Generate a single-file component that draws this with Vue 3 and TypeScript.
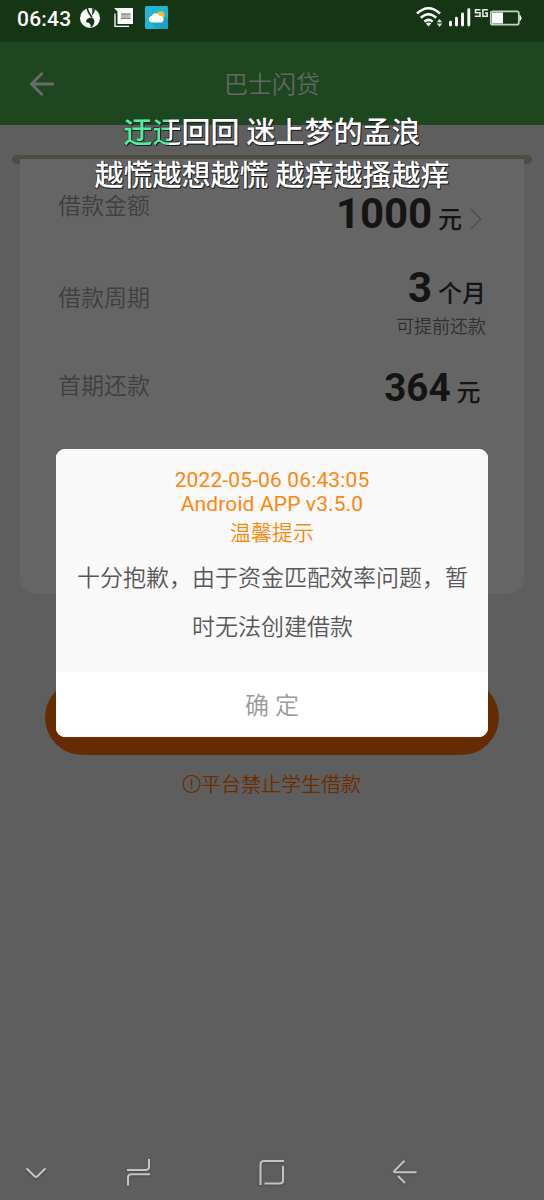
<script setup lang="ts">
interface LoanRow {
  key: string
  label: string
  value: string
  unit: string
  note?: string
  arrow?: boolean
}

const rows: LoanRow[] = [
  { key: 'amount', label: '借款金额', value: '1000', unit: '元', arrow: true },
  { key: 'period', label: '借款周期', value: '3', unit: '个月', note: '可提前还款' },
  { key: 'first', label: '首期还款', value: '364', unit: '元' },
]
</script>

<template>
  <div class="screen">
    <div class="status">
      <span class="clock">06:43</span>
      <svg class="i-app" viewBox="0 0 20 22">
        <circle cx="10" cy="11" r="10" fill="#fff" />
        <path d="M7 1C8 5 9.500 7.500 12 10.500" fill="none" stroke="#163514" stroke-width="1.600" />
        <path d="M12 1.200 15 2.200C14.500 5 13.500 7 11.500 9C12.500 6 12.500 3.500 12 1.200Z" fill="#163514" />
        <path d="M6 15.200C6 12 9 10.500 11.500 10.800C14 11.200 15 14 14 16.500C13.500 18.500 12 20 10.300 20.800C11 19 10.700 17.500 9.500 16.200C8 15 6.800 15.500 6 15.200Z" fill="#163514" />
      </svg>
      <svg class="i-note" viewBox="0 0 20 20">
        <path d="M0 0H19V16H3.500V3.500Z" fill="#fff" />
        <path d="M1 5.500V18.300H15" fill="none" stroke="#fff" stroke-width="1.300" />
        <path d="M7 5.500H16.500V11H7Z" fill="#b5bfb4" />
        <path d="M7 6H16.500M7 10.500H16.500" stroke="#75876f" stroke-width="1.200" />
      </svg>
      <svg class="i-weather" viewBox="0 0 23 23">
        <rect width="23" height="23" rx="1.500" fill="#20b5d5" />
        <path d="M5 16 12 23H21.500Q23 23 23 21.500V13L19 9Z" fill="#1aa3c3" />
        <circle cx="15.800" cy="9" r="3.700" fill="#fdbd22" />
        <path d="M7 16.500A3.300 3.300 0 0 1 6.500 10A4.400 4.400 0 0 1 14.500 9.500A3.700 3.700 0 0 1 16.500 16.500Z" fill="#fff" />
      </svg>
      <div class="grow"></div>
      <svg class="i-net" viewBox="0 0 108 26">
        <g fill="none" stroke="#fff" stroke-width="2.600">
          <path d="M1 8.500Q12.500 -2 24 8.500M4.800 12.700Q12.500 5.800 20.200 12.700M8.500 16.700Q12.500 13 16.500 16.700" />
        </g>
        <path d="M9.800 18.500Q12.500 16.500 15.200 18.500L12.500 21.500Z" fill="#fff" />
        <path d="M20.800 17.300 23.500 14 26.200 17.300ZM20.800 18.600 23.500 22 26.200 18.600Z" fill="#d5dcd4" />
        <path d="M34.500 17.300V20M40.500 13.300V20M46.500 9V20M52.800 4.800V20" stroke="#fff" stroke-width="2.900" stroke-linecap="round" />
        <path d="M64.500 4.800H59.500V7.800H64V11.200H58.800M71.800 4.800H66.900V11.200H71.200V8H69" fill="none" stroke="#edf2ec" stroke-width="1.500" />
        <rect x="74.800" y="6.300" width="28" height="13.400" rx="2" fill="none" stroke="#c8cfc7" stroke-width="1.700" />
        <rect x="76" y="7.500" width="11" height="11" fill="#fff" />
        <path d="M104 10.500Q106.500 13 104 15.500Z" fill="#fff" stroke="#fff" />
      </svg>
    </div>

    <header class="header">
      <svg class="back" viewBox="0 0 26 26">
        <path d="M13.500 2 2.500 13 13.500 24M2.500 13H25" fill="none" stroke="#6b6b6b" stroke-width="2.800" />
      </svg>
      <h1>巴士闪贷</h1>
    </header>

    <main class="page">
      <div class="slot"></div>
      <section class="card">
        <div v-for="row in rows" :key="row.key" class="row" :class="row.key">
          <span class="label">{{ row.label }}</span>
          <div class="right">
            <div class="amount-line">
              <b>{{ row.value }}</b><span class="unit">{{ row.unit }}</span>
              <svg v-if="row.arrow" class="chev" viewBox="0 0 12 22">
                <path d="M1 1 10.500 11 1 21" fill="none" stroke="#504f4a" stroke-width="1.500" />
              </svg>
            </div>
            <div v-if="row.note" class="note">{{ row.note }}</div>
          </div>
        </div>
      </section>
      <div class="submit"></div>
      <p class="warning">
        <svg viewBox="0 0 19 19">
          <circle cx="9.500" cy="9" r="8.500" fill="none" stroke="#6b2d00" stroke-width="1.200" />
          <path d="M9.500 4.300V10.800M9.500 12.300V13.900" stroke="#6b2d00" stroke-width="1.300" />
        </svg>
        <span>平台禁止学生借款</span>
      </p>
    </main>

    <nav class="nav">
      <svg viewBox="0 0 544 56">
        <g fill="none" stroke="#c4c4c4" stroke-width="2">
          <path d="M26.500 24.200 34.500 32.200Q36 33.500 37.500 32.200L45.500 24.200" />
          <path d="M127 26H145.500Q149 26 149 22.500V15M150 30.300H131.500Q128 30.300 128 33.800V41.500" />
          <path d="M284 17H264Q260.500 17 260.500 20.500V41M283 22V36.500Q283 39.500 279.500 39.500H264.500" />
          <path d="M404.500 16.800 394.500 26.800Q393.500 28.300 395 28.300H416.500M398 32 405 39" />
        </g>
      </svg>
    </nav>

    <div class="lyrics">
      <p class="line"><span class="sung">迂</span><span class="partial">迂</span>回回 迷上梦的孟浪</p>
      <p class="line">越慌越想越慌 越痒越搔越痒</p>
    </div>

    <div class="dialog">
      <div class="dialog-body">
        <p class="stamp">2022-05-06 06:43:05</p>
        <p class="stamp">Android APP v3.5.0</p>
        <p class="tip">温馨提示</p>
        <p class="message">十分抱歉，由于资金匹配效率问题，暂时无法创建借款</p>
      </div>
      <button class="ok">确 定</button>
    </div>
  </div>
</template>

<style>
body {
  margin: 0;
  background: #5e5e5e;
}
</style>

<style scoped>
.screen {
  position: relative;
  display: flex;
  flex-direction: column;
  width: 544px;
  height: 1200px;
  overflow: hidden;
  background: #5e5e5e;
  font-family: Roboto, "Noto Sans CJK SC", sans-serif;
}
p, h1 {
  margin: 0;
  font-weight: 400;
}
.status {
  display: flex;
  box-sizing: border-box;
  height: 42px;
  padding: 0 20px 0 17px;
  background: #163514;
}
.clock {
  width: 63px;
  margin-top: 7px;
  color: #fff;
  font-size: 21px;
  font-weight: 500;
  line-height: 25px;
  letter-spacing: 0.2px;
}
.i-app {
  width: 20px;
  height: 22px;
  margin-top: 6.500px;
}
.i-note {
  width: 20px;
  height: 20px;
  margin: 8px 0 0 14px;
}
.i-weather {
  width: 23px;
  height: 23px;
  margin: 6px 0 0 11px;
}
.grow {
  flex: 1;
}
.i-net {
  width: 108px;
  height: 26px;
  margin-top: 5px;
}
.header {
  display: grid;
  grid-template-columns: 80px 1fr 80px;
  align-items: center;
  height: 83px;
  background: #1e471f;
}
.back {
  width: 26px;
  height: 26px;
  margin-left: 29px;
}
.header h1 {
  padding-top: 2px;
  color: #666;
  font-size: 24px;
  font-weight: 350;
  line-height: 32px;
  text-align: center;
}
.page {
  display: flex;
  flex: 1;
  flex-direction: column;
  align-items: center;
  padding-top: 30px;
}
.slot {
  width: 520px;
  height: 9px;
  border-radius: 5px;
  background: #4f4b40;
}
.card {
  box-sizing: border-box;
  width: 504px;
  height: 435px;
  margin-top: -5px;
  padding: 0 38px;
  border-radius: 0 0 16px 16px;
  background: #656565;
}
.row {
  display: flex;
  justify-content: space-between;
}
.amount {
  height: 97px;
  padding-top: 31px;
  box-sizing: border-box;
}
.period {
  height: 99px;
  padding-top: 8px;
  box-sizing: border-box;
}
.first {
  padding-top: 9px;
}
.label {
  margin-top: 1px;
  color: #3f3f3f;
  font-size: 23px;
  font-weight: 350;
  line-height: 32px;
}
.period .label {
  margin-top: 19px;
}
.first .label {
  margin-top: 7px;
}
.right {
  text-align: right;
  color: #141414;
}
.amount-line {
  display: flex;
  align-items: baseline;
  justify-content: flex-end;
  height: 48px;
}
.amount-line b {
  font-size: 42px;
  font-weight: 700;
  line-height: 48px;
}
.amount b {
  letter-spacing: -0.100px;
}
.first b {
  font-size: 38.500px;
}
.first .amount-line {
  margin-right: 5.500px;
}
.unit {
  margin-left: 6px;
  font-size: 24px;
  font-weight: 500;
  line-height: 32px;
}
.chev {
  align-self: flex-start;
  width: 12px;
  height: 22px;
  margin: 18px 4px 0 8px;
}
.note {
  margin-top: 3px;
  color: #303030;
  font-size: 18px;
  font-weight: 350;
  line-height: 24px;
}
.submit {
  width: 454px;
  height: 75px;
  margin-top: 86px;
  border-radius: 38px;
  background: #662b00;
}
.warning {
  display: flex;
  align-items: center;
  margin: 15px 1px 0 0;
  color: #6b2d00;
  font-size: 20px;
  font-weight: 350;
  line-height: 28px;
}
.warning span {
  padding-top: 2px;
  line-height: 26px;
}
.warning svg {
  width: 19px;
  height: 19px;
}
.nav {
  height: 56px;
}
.nav svg {
  display: block;
  width: 544px;
  height: 56px;
  filter: drop-shadow(0 1px 1px #4a4a4a);
}
.lyrics {
  position: absolute;
  top: 112px;
  left: 0;
  width: 544px;
  color: #fff;
  font-size: 29px;
  text-align: center;
  text-shadow: 1px 1px 0 #1a1a1a, -0.500px -0.500px 0 #333, 0.500px -0.500px 0 #333, -0.500px 1px 0 #333;
}
.line {
  font-weight: 500;
  line-height: 43px;
  white-space: nowrap;
}
.sung {
  color: #4df0a0;
}
.partial {
  display: inline-block;
  background: linear-gradient(90deg, #4df0a0 60%, #fff 60%);
  background-clip: text;
  color: transparent;
  text-shadow: none;
  filter: drop-shadow(1px 1px 0 #1a1a1a) drop-shadow(-0.500px -0.500px 0 #333);
}
.dialog {
  position: absolute;
  top: 449px;
  left: 56px;
  width: 432px;
  height: 288px;
  overflow: hidden;
  border-radius: 9px;
  background: #fff;
  text-align: center;
}
.dialog-body {
  box-sizing: border-box;
  height: 223px;
  padding: 19px 20px 0;
  background: #f9f9f9;
}
.stamp,
.tip {
  color: #ff860d;
  font-size: 21px;
  line-height: 24px;
}
.stamp {
  letter-spacing: 0.130px;
}
.tip {
  padding-top: 1px;
  font-weight: 350;
  line-height: 33px;
}
.message {
  margin: 4px -1px 0 0;
  color: #585858;
  font-size: 23px;
  font-weight: 350;
  line-height: 49px;
}
.ok {
  width: 432px;
  height: 65px;
  padding: 3px 0 0;
  border: 0;
  background: #fff;
  color: #999;
  font: 350 24px/62px Roboto, "Noto Sans CJK SC", sans-serif;
}
</style>
